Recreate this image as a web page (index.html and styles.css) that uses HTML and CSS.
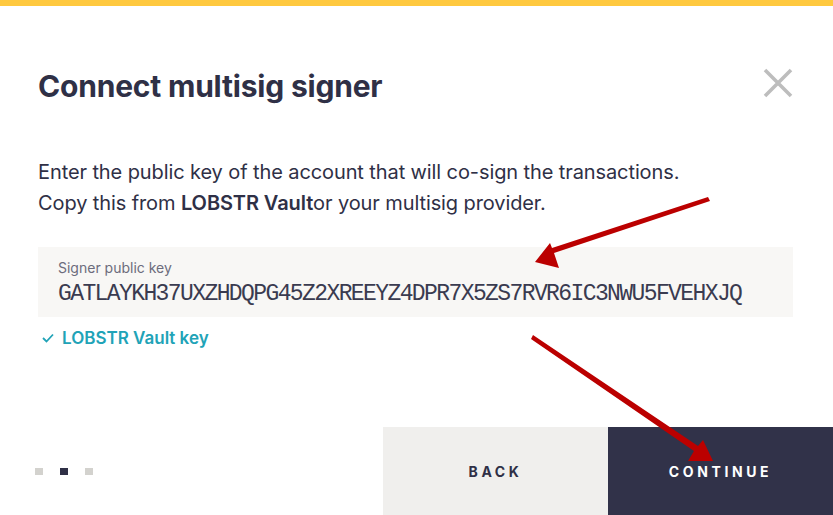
FILE: index.html
```html
<!DOCTYPE html>
<html>
<head>
<meta charset="utf-8">
<link rel="stylesheet" href="styles.css">
</head>
<body>
<div class="modal">
  <div class="topbar"></div>
  <div class="content">
    <div class="header">
      <h1 class="title">Connect multisig signer</h1>
      <button class="close" aria-label="Close">
        <svg width="30" height="30" viewBox="0 0 30 30"><path d="M2 2 L28 28 M28 2 L2 28" stroke="#bdbdbd" stroke-width="3.6" fill="none"/></svg>
      </button>
    </div>
    <p class="desc">Enter the public key of the account that will co-sign the transactions.<br>Copy this from <b>LOBSTR Vault</b>or your multisig provider.</p>
    <div class="field">
      <div class="label">Signer public key</div>
      <div class="value">GATLAYKH37UXZHDQPG45Z2XREEYZ4DPR7X5ZS7RVR6IC3NWU5FVEHXJQ</div>
    </div>
    <div class="vault">
      <svg width="12" height="10" viewBox="0 0 12 10"><path d="M1 5 L4.5 8.5 L11 1.5" stroke="#21a3b7" stroke-width="1.8" fill="none"/></svg>
      <span>LOBSTR Vault key</span>
    </div>
  </div>
  <div class="footer">
    <div class="dots"><span class="dot"></span><span class="dot active"></span><span class="dot"></span></div>
    <button class="btn back">BACK</button>
    <button class="btn next">CONTINUE</button>
  </div>
  <svg class="arrows" width="833" height="515" viewBox="0 0 833 515">
    <polygon fill="#bb0000" points="708,197 710,201 554,253 559,268 535,262 550,243 552,248"/>
    <polygon fill="#bb0000" points="533,335 531,339 694,451 688,461 713,461 703,440 698,446"/>
  </svg>
</div>
</body>
</html>
```
FILE: styles.css
```css
* { box-sizing: border-box; }
html, body { margin: 0; padding: 0; background: #fff; }
body { font-family: Inter, "Noto Sans", sans-serif; color: #2f3046; }
.modal { position: relative; width: 833px; height: 515px; overflow: hidden; display: flex; flex-direction: column; }
.topbar { height: 6px; background: #ffc93f; flex: none; }
.content { padding: 0 40px 0 38px; flex: 1; }
.header { display: flex; justify-content: space-between; align-items: flex-start; margin-top: 62px; }
.title { margin: 0; font-size: 30px; font-weight: 700; letter-spacing: -0.2px; line-height: 36px; color: #2f3046; }
.close { background: none; border: 0; padding: 0; margin-top: 0; cursor: pointer; }
.desc { margin: 53px 0 0; font-size: 20px; line-height: 31px; color: #2f3046; letter-spacing: -0.1px; }
.desc b { font-weight: 600; }
.field { margin-top: 28px; background: #f8f7f5; height: 70px; padding: 12px 20px 0; }
.label { font-size: 14px; line-height: 18px; color: #6c6c7c; }
.value { font-family: "Liberation Mono", monospace; font-size: 23px; letter-spacing: -1.6px; line-height: 26px; color: #3a3b50; margin-top: 4px; }
.vault { margin-top: 10px; margin-left: 4px; display: flex; align-items: center; gap: 8px; color: #21a3b7; font-weight: 600; font-size: 17px; line-height: 22px; }
.footer { display: flex; height: 88px; flex: none; }
.dots { flex: 1; display: flex; align-items: center; gap: 17px; padding-left: 35px; }
.dot { width: 8px; height: 7px; background: #d3d2ce; }
.dot.active { background: #2f3046; }
.btn { width: 225px; border: 0; font-family: Inter, sans-serif; font-weight: 700; font-size: 14px; letter-spacing: 3.6px; cursor: pointer; }
.back { background: #f0efed; color: #2f3046; }
.next { background: #313249; color: #fff; }
.arrows { position: absolute; left: 0; top: 0; pointer-events: none; }
```
